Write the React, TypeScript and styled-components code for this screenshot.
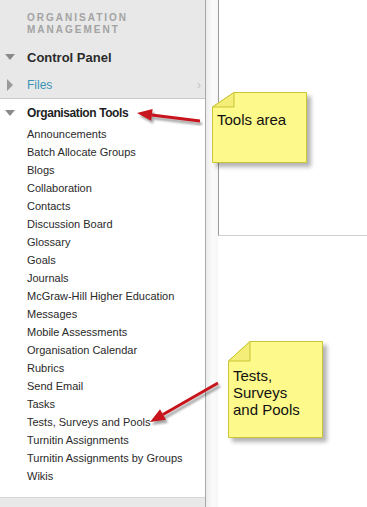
import React from 'react';
import styled, {createGlobalStyle} from 'styled-components';

const Global = createGlobalStyle`
  html, body {
    margin: 0;
    padding: 0;
    background: #fff;
    font-family: "Liberation Sans", Arial, sans-serif;
  }
`;

const Page = styled.div`
  position: relative;
  display: flex;
  width: 367px;
  height: 507px;
  overflow: hidden;
`;

const Sidebar = styled.div`
  display: flex;
  flex-direction: column;
  width: 205px;
  border-right: 1px solid #a8a8a8;
  background: #fff;
`;

const Header = styled.div`
  background: #e8e8e8;
  border-bottom: 1px solid #c9c9c9;
  padding-top: 12px;
`;

const Section = styled.div`
  padding-left: 27px;
  font-size: 10px;
  font-weight: bold;
  line-height: 12px;
  letter-spacing: 2px;
  color: #a3a3a3;
`;

interface RowProps {
  h: number
  pt?: number
}

const Row = styled.div<RowProps>`
  position: relative;
  display: flex;
  align-items: center;
  height: ${p => p.h}px;
  padding-left: 27px;
  padding-top: ${p => p.pt || 0}px;
`;

const Caret = styled.span`
  position: absolute;
  left: 5px;
  top: 50%;
  margin-top: -3px;
  width: 0;
  height: 0;
  border-left: 5px solid transparent;
  border-right: 5px solid transparent;
  border-top: 6px solid #8a8a8a;
`;

const CaretRight = styled.span`
  position: absolute;
  left: 7px;
  top: 50%;
  margin-top: -5px;
  width: 0;
  height: 0;
  border-top: 6px solid transparent;
  border-bottom: 6px solid transparent;
  border-left: 6px solid #9a9a9a;
`;

const PanelTitle = styled.span`
  font-size: 13px;
  font-weight: bold;
  color: #2b2b2b;
`;

const GroupTitle = styled.span`
  font-size: 12px;
  font-weight: bold;
  letter-spacing: -0.4px;
  color: #1e1e1e;
`;

const FileLink = styled.span`
  font-size: 12px;
  color: #3c94b4;
`;

const Chevron = styled.span`
  position: absolute;
  right: 4px;
  font-size: 12px;
  color: #c4c4c4;
`;

const Tools = styled.div`
  padding-top: 2px;
`;

const List = styled.ul`
  list-style: none;
  margin: 0;
  padding: 0 0 0 27px;
`;

const Item = styled.li`
  font-size: 11px;
  line-height: 18px;
  color: #2a2a2a;
  white-space: nowrap;
`;

const Footer = styled.div`
  margin-top: auto;
  height: 9px;
  border-top: 1px solid #d6d6d6;
  background: #e9e9e9;
`;

const Gutter = styled.div`
  width: 12px;
  background: linear-gradient(to right, #ececec, #fbfbfb 55%, #f6f6f6);
`;

const Content = styled.div`
  flex: 1;
  background: #fff;
`;

const Panel = styled.div`
  height: 235px;
  border-left: 1px solid #9c9c9c;
  border-bottom: 1px solid #cfcfcf;
  background: #fff;
`;

const Overlay = styled.svg`
  position: absolute;
  left: 0;
  top: 0;
  pointer-events: none;
`;

interface NoteProps {
  x: number
  y: number
  w: number
  h: number
}

const NoteBox = styled.div<NoteProps>`
  position: absolute;
  left: ${p => p.x}px;
  top: ${p => p.y}px;
  width: ${p => p.w}px;
  height: ${p => p.h}px;
`;

const NoteShape = styled.svg`
  position: absolute;
  left: 0;
  top: 0;
  overflow: visible;
`;

const NoteText = styled.div<{top: number}>`
  position: relative;
  padding: ${p => p.top}px 4px 0 5px;
  font-size: 15px;
  line-height: 17px;
  color: #111;
`;

const Note = ({x, y, w, h, fx, fy, top, children}: NoteProps & {fx: number, fy: number, top: number, children: React.ReactNode}) => (
  <NoteBox x={x} y={y} w={w} h={h}>
    <NoteShape width={w} height={h}>
      <defs>
        <filter id={`sh${x}`} x="-20%" y="-20%" width="150%" height="150%">
          <feDropShadow dx="4" dy="4" stdDeviation="2" floodColor="#000" floodOpacity="0.3"/>
        </filter>
      </defs>
      <polygon
        points={`${fx},0.5 ${w - 0.5},0.5 ${w - 0.5},${h - 0.5} 0.5,${h - 0.5} 0.5,${fy}`}
        fill="#fdf98a" stroke="#c9c634" strokeWidth="1" filter={`url(#sh${x})`}
      />
      <polygon points={`${fx},0.5 ${fx},${fy} 0.5,${fy}`} fill="#f4ee78" stroke="#c9c634" strokeWidth="1"/>
    </NoteShape>
    <NoteText top={top}>{children}</NoteText>
  </NoteBox>
);

const Arrow = ({x1, y1, x2, y2}: {x1: number, y1: number, x2: number, y2: number}) => {
  const a = Math.atan2(y2 - y1, x2 - x1);
  const len = 15, wid = 6;
  const bx = x2 - Math.cos(a) * len, by = y2 - Math.sin(a) * len;
  const px = -Math.sin(a) * wid, py = Math.cos(a) * wid;
  const head = `${x2},${y2} ${bx + px},${by + py} ${bx - px},${by - py}`;
  return (
    <g>
      <g transform="translate(2,3)" opacity="0.35" filter="url(#blur)">
        <line x1={x1} y1={y1} x2={bx} y2={by} stroke="#000" strokeWidth="3"/>
        <polygon points={head} fill="#000"/>
      </g>
      <line x1={x1} y1={y1} x2={bx} y2={by} stroke="#c8141c" strokeWidth="3"/>
      <polygon points={head} fill="#c8141c"/>
    </g>
  );
};

const tools = [
  'Announcements',
  'Batch Allocate Groups',
  'Blogs',
  'Collaboration',
  'Contacts',
  'Discussion Board',
  'Glossary',
  'Goals',
  'Journals',
  'McGraw-Hill Higher Education',
  'Messages',
  'Mobile Assessments',
  'Organisation Calendar',
  'Rubrics',
  'Send Email',
  'Tasks',
  'Tests, Surveys and Pools',
  'Turnitin Assignments',
  'Turnitin Assignments by Groups',
  'Wikis',
];

export default function App() {
  return (
    <Page>
      <Global/>
      <Sidebar>
        <Header>
          <Section>ORGANISATION<br/>MANAGEMENT</Section>
          <Row h={26} style={{marginTop: 8}}>
            <Caret/>
            <PanelTitle>Control Panel</PanelTitle>
          </Row>
          <Row h={27} pt={1}>
            <CaretRight/>
            <FileLink>Files</FileLink>
            <Chevron>›</Chevron>
          </Row>
        </Header>
        <Tools>
          <Row h={24}>
            <Caret/>
            <GroupTitle>Organisation Tools</GroupTitle>
          </Row>
          <List>
            {tools.map(t => <Item key={t}>{t}</Item>)}
          </List>
        </Tools>
        <Footer/>
      </Sidebar>
      <Gutter/>
      <Content>
        <Panel/>
      </Content>

      <Overlay width={367} height={507}>
        <defs>
          <filter id="blur"><feGaussianBlur stdDeviation="1.2"/></filter>
        </defs>
        <Arrow x1={200} y1={121} x2={137} y2={113}/>
        <Arrow x1={218} y1={383} x2={150} y2={422}/>
      </Overlay>

      <Note x={212} y={92} w={95} h={71} fx={22} fy={15} top={19}>Tools area</Note>
      <Note x={228} y={341} w={95} h={97} fx={22} fy={20} top={26}>Tests,<br/>Surveys<br/>and Pools</Note>
    </Page>
  );
}
